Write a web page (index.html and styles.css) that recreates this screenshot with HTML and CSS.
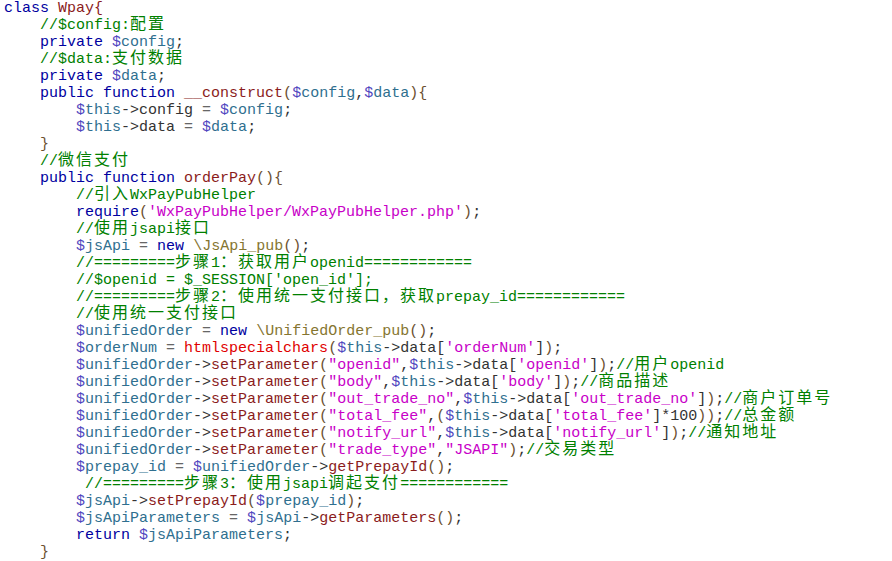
FILE: index.html
```html
<!DOCTYPE html>
<html lang="zh">
<head>
    <meta charset="UTF-8">
    <title>Wpay</title>
    <link rel="stylesheet" href="styles.css">
</head>
<body>
<pre class="code"><span class="kw">class</span> <span class="fn">Wpay{</span>
    <span class="cm">//$config:<span class="zh">配置</span></span>
    <span class="kw">private</span> <span class="v"><i>$</i>config</span>;
    <span class="cm">//$data:<span class="zh">支付数据</span></span>
    <span class="kw">private</span> <span class="v"><i>$</i>data</span>;
    <span class="kw">public</span> <span class="kw">function</span> <span class="fn">__construct</span><span class="p">(</span><span class="v"><i>$</i>config</span>,<span class="v"><i>$</i>data</span><span class="p">){</span>
        <span class="v"><i>$</i>this</span>-&gt;config <span class="op">=</span> <span class="v"><i>$</i>config</span>;
        <span class="v"><i>$</i>this</span>-&gt;data <span class="op">=</span> <span class="v"><i>$</i>data</span>;
    <span class="p">}</span>
    <span class="cm">//<span class="zh">微信支付</span></span>
    <span class="kw">public</span> <span class="kw">function</span> <span class="fn">orderPay</span><span class="p">(){</span>
        <span class="cm">//<span class="zh">引入</span>WxPayPubHelper</span>
        <span class="kw">require</span><span class="p">(</span><span class="str">'WxPayPubHelper/WxPayPubHelper.php'</span><span class="p">)</span>;
        <span class="cm">//<span class="zh">使用</span>jsapi<span class="zh">接口</span></span>
        <span class="v"><i>$</i>jsApi</span> <span class="op">=</span> <span class="kw">new</span> <span class="cls">\JsApi_pub</span><span class="p">()</span>;
        <span class="cm">//=========<span class="zh">步骤</span>1<span class="zh">：获取用户</span>openid============</span>
        <span class="cm">//$openid = $_SESSION['open_id'];</span>
        <span class="cm">//=========<span class="zh">步骤</span>2<span class="zh">：使用统一支付接口，获取</span>prepay_id============</span>
        <span class="cm">//<span class="zh">使用统一支付接口</span></span>
        <span class="v"><i>$</i>unifiedOrder</span> <span class="op">=</span> <span class="kw">new</span> <span class="cls">\UnifiedOrder_pub</span><span class="p">()</span>;
        <span class="v"><i>$</i>orderNum</span> <span class="op">=</span> <span class="bi">htmlspecialchars</span><span class="p">(</span><span class="v"><i>$</i>this</span>-&gt;data[<span class="str">'orderNum'</span>]<span class="p">)</span>;
        <span class="v"><i>$</i>unifiedOrder</span>-&gt;<span class="fn">setParameter</span><span class="p">(</span><span class="str">"openid"</span>,<span class="v"><i>$</i>this</span>-&gt;data[<span class="str">'openid'</span>]<span class="p">)</span>;<span class="cm">//<span class="zh">用户</span>openid</span>
        <span class="v"><i>$</i>unifiedOrder</span>-&gt;<span class="fn">setParameter</span><span class="p">(</span><span class="str">"body"</span>,<span class="v"><i>$</i>this</span>-&gt;data[<span class="str">'body'</span>]<span class="p">)</span>;<span class="cm">//<span class="zh">商品描述</span></span>
        <span class="v"><i>$</i>unifiedOrder</span>-&gt;<span class="fn">setParameter</span><span class="p">(</span><span class="str">"out_trade_no"</span>,<span class="v"><i>$</i>this</span>-&gt;data[<span class="str">'out_trade_no'</span>]<span class="p">)</span>;<span class="cm">//<span class="zh">商户订单号</span></span>
        <span class="v"><i>$</i>unifiedOrder</span>-&gt;<span class="fn">setParameter</span><span class="p">(</span><span class="str">"total_fee"</span>,<span class="p">(</span><span class="v"><i>$</i>this</span>-&gt;data[<span class="str">'total_fee'</span>]*100<span class="p">))</span>;<span class="cm">//<span class="zh">总金额</span></span>
        <span class="v"><i>$</i>unifiedOrder</span>-&gt;<span class="fn">setParameter</span><span class="p">(</span><span class="str">"notify_url"</span>,<span class="v"><i>$</i>this</span>-&gt;data[<span class="str">'notify_url'</span>]<span class="p">)</span>;<span class="cm">//<span class="zh">通知地址</span></span>
        <span class="v"><i>$</i>unifiedOrder</span>-&gt;<span class="fn">setParameter</span><span class="p">(</span><span class="str">"trade_type"</span>,<span class="str">"JSAPI"</span><span class="p">)</span>;<span class="cm">//<span class="zh">交易类型</span></span>
        <span class="v"><i>$</i>prepay_id</span> <span class="op">=</span> <span class="v"><i>$</i>unifiedOrder</span>-&gt;<span class="fn">getPrepayId</span><span class="p">()</span>;
         <span class="cm">//=========<span class="zh">步骤</span>3<span class="zh">：使用</span>jsapi<span class="zh">调起支付</span>============</span>
        <span class="v"><i>$</i>jsApi</span>-&gt;<span class="fn">setPrepayId</span><span class="p">(</span><span class="v"><i>$</i>prepay_id</span><span class="p">)</span>;
        <span class="v"><i>$</i>jsApiParameters</span> <span class="op">=</span> <span class="v"><i>$</i>jsApi</span>-&gt;<span class="fn">getParameters</span><span class="p">()</span>;
        <span class="kw">return</span> <span class="v"><i>$</i>jsApiParameters</span>;
    <span class="p">}</span></pre>
</body>
</html>
```

FILE: styles.css
```css
body {
    margin: 0;
    padding: 0;
    background-color: #fff;
}

.code {
    margin: 0;
    padding: 0 0 0 4px;
    font-family: "Liberation Mono", "Courier New", monospace;
    font-size: 15px;
    line-height: 17px;
    color: #333;
}

/* chinese text takes two columns, without growing the line */
.zh {
    font-family: "Noto Sans CJK SC", sans-serif;
    font-size: 16px;
    line-height: 0;
    letter-spacing: 2px;
}

.kw {
    color: #0000a0;
}

.fn {
    color: #8b1c1c;
}

.bi {
    color: #e00000;
}

.str {
    color: #c800c8;
}

.cm {
    color: #008000;
}

.cls {
    color: #857530;
}

.p {
    color: #6b5030;
}

.op {
    color: #666;
}

.v {
    color: #2f6f8f;
}

.v i {
    font-style: normal;
    color: #5046c0;
}
```
